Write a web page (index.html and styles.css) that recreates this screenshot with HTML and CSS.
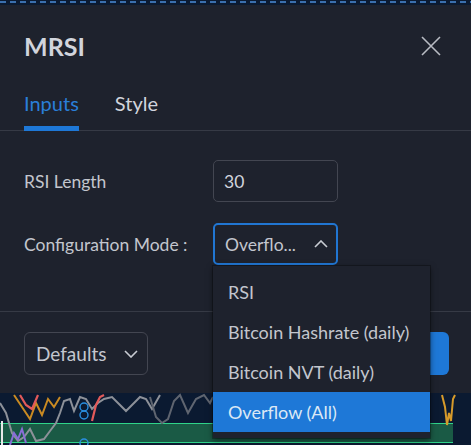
FILE: index.html
```html
<!DOCTYPE html>
<html>
<head>
<meta charset="utf-8">
<link rel="stylesheet" href="styles.css">
</head>
<body>
<div class="chart-top"></div>
<div class="dialog">
  <div class="header">
    <div class="title">MRSI</div>
    <div class="close">
      <svg width="20" height="20" viewBox="0 0 20 20"><path d="M1 1L19 19M19 1L1 19" stroke="#b8bbc3" stroke-width="1.6" fill="none"/></svg>
    </div>
  </div>
  <div class="tabs">
    <div class="tab active">Inputs</div>
    <div class="tab">Style</div>
  </div>
  <div class="content">
    <div class="row">
      <div class="label">RSI Length</div>
      <div class="field">30</div>
    </div>
    <div class="row">
      <div class="label">Configuration Mode :</div>
      <div class="field select">
        <span>Overflo...</span>
        <svg width="14" height="8" viewBox="0 0 14 8"><path d="M1 7L7 1L13 7" stroke="#c9ccd3" stroke-width="1.6" fill="none"/></svg>
      </div>
    </div>
  </div>
  <div class="footer">
    <div class="btn defaults">
      <span>Defaults</span>
      <svg width="14" height="8" viewBox="0 0 14 8"><path d="M1 1L7 7L13 1" stroke="#c9ccd3" stroke-width="1.6" fill="none"/></svg>
    </div>
    <div class="btn ok"></div>
  </div>
</div>
<div class="chart-bottom">
  <svg width="471" height="52" viewBox="0 0 471 52">
    <rect x="0" y="0" width="471" height="52" fill="#0b1a31"/>
    <rect x="0" y="30" width="453" height="19" fill="#1a5a45"/>
    <line x1="0" y1="30.5" x2="453" y2="30.5" stroke="#2fd48a" stroke-width="1.2"/>
    <line x1="0" y1="49.5" x2="453" y2="49.5" stroke="#2fd48a" stroke-width="1.2"/>
    <polyline points="0,10 6,20 12,40 18,48 24,44 30,36 36,48 44,46 50,38 56,30 60,20 64,8 70,6 74,18 80,4 86,6 92,16 98,10 104,6 112,4 120,12 126,18 134,10 140,4 146,6 152,16 160,2" fill="none" stroke="#8d9199" stroke-width="2"/>
    <polyline points="14,2 22,14 30,26 36,10 42,22 48,6 54,14 60,4" fill="none" stroke="#c98a22" stroke-width="2"/>
    <polyline points="20,2 26,12 32,16 38,2" fill="none" stroke="#e25a5a" stroke-width="2.2"/>
    <polyline points="92,28 96,12 100,4 104,2" fill="none" stroke="#e25a5a" stroke-width="2.2"/>
    <circle cx="84" cy="14" r="4" fill="none" stroke="#2a8fe0" stroke-width="1.4"/>
    <circle cx="84" cy="22" r="4" fill="none" stroke="#2a8fe0" stroke-width="1.4"/>
    <circle cx="84" cy="50" r="4" fill="none" stroke="#2a8fe0" stroke-width="1.4"/>
    <polyline points="150,4 156,24 162,30 168,26 174,8 180,2 188,20 196,6 204,2 210,10 213,4" fill="none" stroke="#5f6570" stroke-width="2"/>
    <polyline points="10,52 14,40 18,46 22,36 26,50" fill="none" stroke="#8a6ed8" stroke-width="2"/>
    <line x1="2" y1="28" x2="2" y2="52" stroke="#e8e8e8" stroke-width="2"/>
    <polyline points="442,2 445,14 447,32 449,20 451,28 453,6 455,2" fill="none" stroke="#d69a2a" stroke-width="2"/>
  </svg>
</div>
<div class="menu">
  <div class="item">RSI</div>
  <div class="item">Bitcoin Hashrate (daily)</div>
  <div class="item">Bitcoin NVT (daily)</div>
  <div class="item selected">Overflow (All)</div>
</div>
</body>
</html>
```

FILE: styles.css
```css
* { box-sizing: border-box; }
html, body {
  margin: 0;
  padding: 0;
}
body {
  width: 471px;
  height: 445px;
  overflow: hidden;
  background: #0b1a31;
  font-family: Lato, "Open Sans", sans-serif;
  font-size: 17.5px;
  color: #d1d4dc;
  position: relative;
}
.chart-top {
  height: 5px;
  background:
    repeating-linear-gradient(90deg, #3a6fae 0 6px, transparent 6px 10px) 0 1px / 100% 2px no-repeat,
    #0b1a31;
}
.dialog {
  height: 388px;
  background: #1e222d;
  display: flex;
  flex-direction: column;
}
.header {
  display: flex;
  align-items: center;
  justify-content: space-between;
  padding: 25px 30px 0 24px;
}
.title {
  font-size: 25px;
  font-weight: 700;
  line-height: 32px;
  color: #d1d4dc;
}
.close {
  width: 20px;
  height: 20px;
  display: flex;
}
.tabs {
  display: flex;
  gap: 36px;
  margin-top: 27px;
  padding-left: 24px;
  border-bottom: 1px solid #363a45;
}
.tab {
  position: relative;
  font-size: 20px;
  line-height: 28px;
  padding-bottom: 13px;
  color: #d1d4dc;
}
.tab.active {
  color: #2a7fd9;
}
.tab.active::after {
  content: "";
  position: absolute;
  left: 0;
  right: 0;
  bottom: -1px;
  height: 5px;
  background: #1e78d7;
}
.content {
  display: flex;
  flex-direction: column;
  gap: 21px;
  padding: 29px 0 46px 24px;
  border-bottom: 1px solid #363a45;
}
.row {
  display: flex;
  align-items: center;
}
.label {
  width: 189px;
  color: #c3c6ce;
}
.field {
  width: 125px;
  height: 42px;
  border: 1px solid #434651;
  border-radius: 5px;
  display: flex;
  align-items: center;
  padding: 0 10px;
}
.select {
  border: 2px solid #2176d2;
  justify-content: space-between;
  padding: 0 8px 0 10px;
}
.select span { color: #c3c6ce; }
.footer {
  display: flex;
  align-items: center;
  justify-content: space-between;
  padding: 20px 22px 0 24px;
}
.btn {
  height: 43px;
  border-radius: 6px;
  display: flex;
  align-items: center;
}
.defaults {
  width: 124px;
  border: 1px solid #434651;
  padding: 0 9px 0 11px;
  justify-content: space-between;
  color: #c3c6ce;
  font-size: 19px;
}
.ok {
  width: 70px;
  background: #1e78d7;
}
.chart-bottom {
  height: 52px;
  display: flex;
}
.menu {
  position: absolute;
  left: 213px;
  top: 266px;
  width: 217px;
  padding: 6px 0;
  background: #1e222d;
  box-shadow: 0 2px 6px rgba(0, 0, 0, 0.55), 0 0 0 1px rgba(0, 0, 0, 0.25);
  font-size: 18px;
}
.item {
  height: 40px;
  display: flex;
  align-items: center;
  padding-left: 15px;
  color: #c3c6ce;
}
.item.selected {
  background: #1e78d7;
  color: #dce8f5;
}
```
